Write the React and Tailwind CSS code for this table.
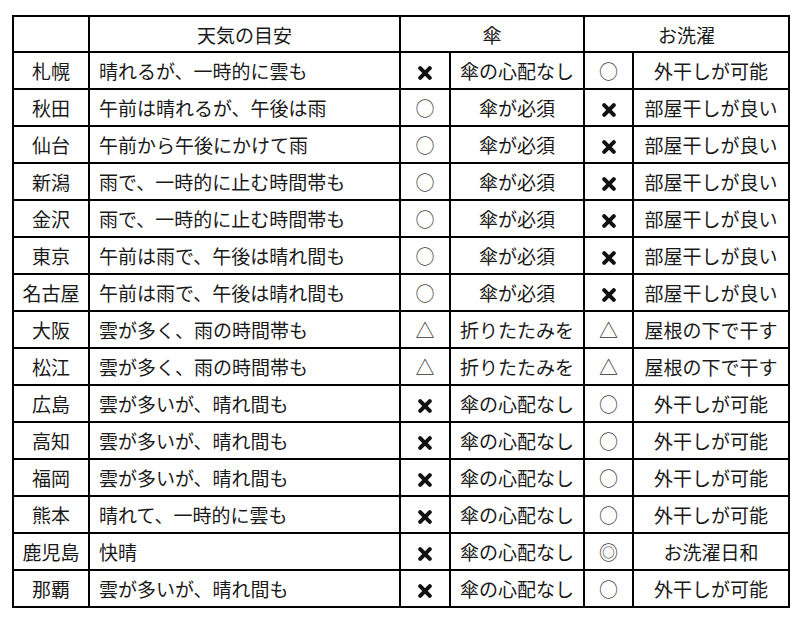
import React from "react";

const X = () => (
  <svg width="14" height="14" viewBox="0 0 14 14" className="inline-block align-middle">
    <path d="M2.2 2.2 L11.8 11.8 M11.8 2.2 L2.2 11.8" stroke="#111" strokeWidth="4" strokeLinecap="round" />
  </svg>
);

const Sym = ({ s }) => {
  if (s === "x") return <X />;
  if (s === "o") return <span className="text-[#444]">○</span>;
  if (s === "t") return <span className="text-[#333]">△</span>;
  return <span className="text-[#444]">◎</span>;
};

const rows = [
  ["札幌", "晴れるが、一時的に雲も", "x", "傘の心配なし", "o", "外干しが可能"],
  ["秋田", "午前は晴れるが、午後は雨", "o", "傘が必須", "x", "部屋干しが良い"],
  ["仙台", "午前から午後にかけて雨", "o", "傘が必須", "x", "部屋干しが良い"],
  ["新潟", "雨で、一時的に止む時間帯も", "o", "傘が必須", "x", "部屋干しが良い"],
  ["金沢", "雨で、一時的に止む時間帯も", "o", "傘が必須", "x", "部屋干しが良い"],
  ["東京", "午前は雨で、午後は晴れ間も", "o", "傘が必須", "x", "部屋干しが良い"],
  ["名古屋", "午前は雨で、午後は晴れ間も", "o", "傘が必須", "x", "部屋干しが良い"],
  ["大阪", "雲が多く、雨の時間帯も", "t", "折りたたみを", "t", "屋根の下で干す"],
  ["松江", "雲が多く、雨の時間帯も", "t", "折りたたみを", "t", "屋根の下で干す"],
  ["広島", "雲が多いが、晴れ間も", "x", "傘の心配なし", "o", "外干しが可能"],
  ["高知", "雲が多いが、晴れ間も", "x", "傘の心配なし", "o", "外干しが可能"],
  ["福岡", "雲が多いが、晴れ間も", "x", "傘の心配なし", "o", "外干しが可能"],
  ["熊本", "晴れて、一時的に雲も", "x", "傘の心配なし", "o", "外干しが可能"],
  ["鹿児島", "快晴", "x", "傘の心配なし", "w", "お洗濯日和"],
  ["那覇", "雲が多いが、晴れ間も", "x", "傘の心配なし", "o", "外干しが可能"],
];

export default function App() {
  return (
    <div
      className="w-[800px] h-[623px] bg-white pt-[15px] pl-[12px] text-[19px] leading-none text-[#1a1a1a]"
      style={{ fontFamily: '"Noto Sans CJK JP", "Noto Sans", sans-serif' }}
    >
      <table className="border-collapse table-fixed w-[776px]">
        <colgroup>
          <col className="w-[76px]" />
          <col className="w-[311px]" />
          <col className="w-[50px]" />
          <col className="w-[134px]" />
          <col className="w-[49px]" />
          <col className="w-[156px]" />
        </colgroup>
        <thead>
          <tr className="h-[36px]">
            <th className="border-2 border-black font-normal"></th>
            <th className="border-2 border-black font-normal text-center">天気の目安</th>
            <th colSpan={2} className="border-2 border-black font-normal text-center">傘</th>
            <th colSpan={2} className="border-2 border-black font-normal text-center">お洗濯</th>
          </tr>
        </thead>
        <tbody>
          {rows.map((r, i) => (
            <tr key={i} className="h-[37px]">
              <td className="border-2 border-black text-center p-0">{r[0]}</td>
              <td className="border-2 border-black text-left pl-[9px] p-0">{r[1]}</td>
              <td className="border-2 border-black text-center p-0"><Sym s={r[2]} /></td>
              <td className="border-2 border-black text-center p-0">{r[3]}</td>
              <td className="border-2 border-black text-center p-0"><Sym s={r[4]} /></td>
              <td className="border-2 border-black text-center p-0">{r[5]}</td>
            </tr>
          ))}
        </tbody>
      </table>
    </div>
  );
}
